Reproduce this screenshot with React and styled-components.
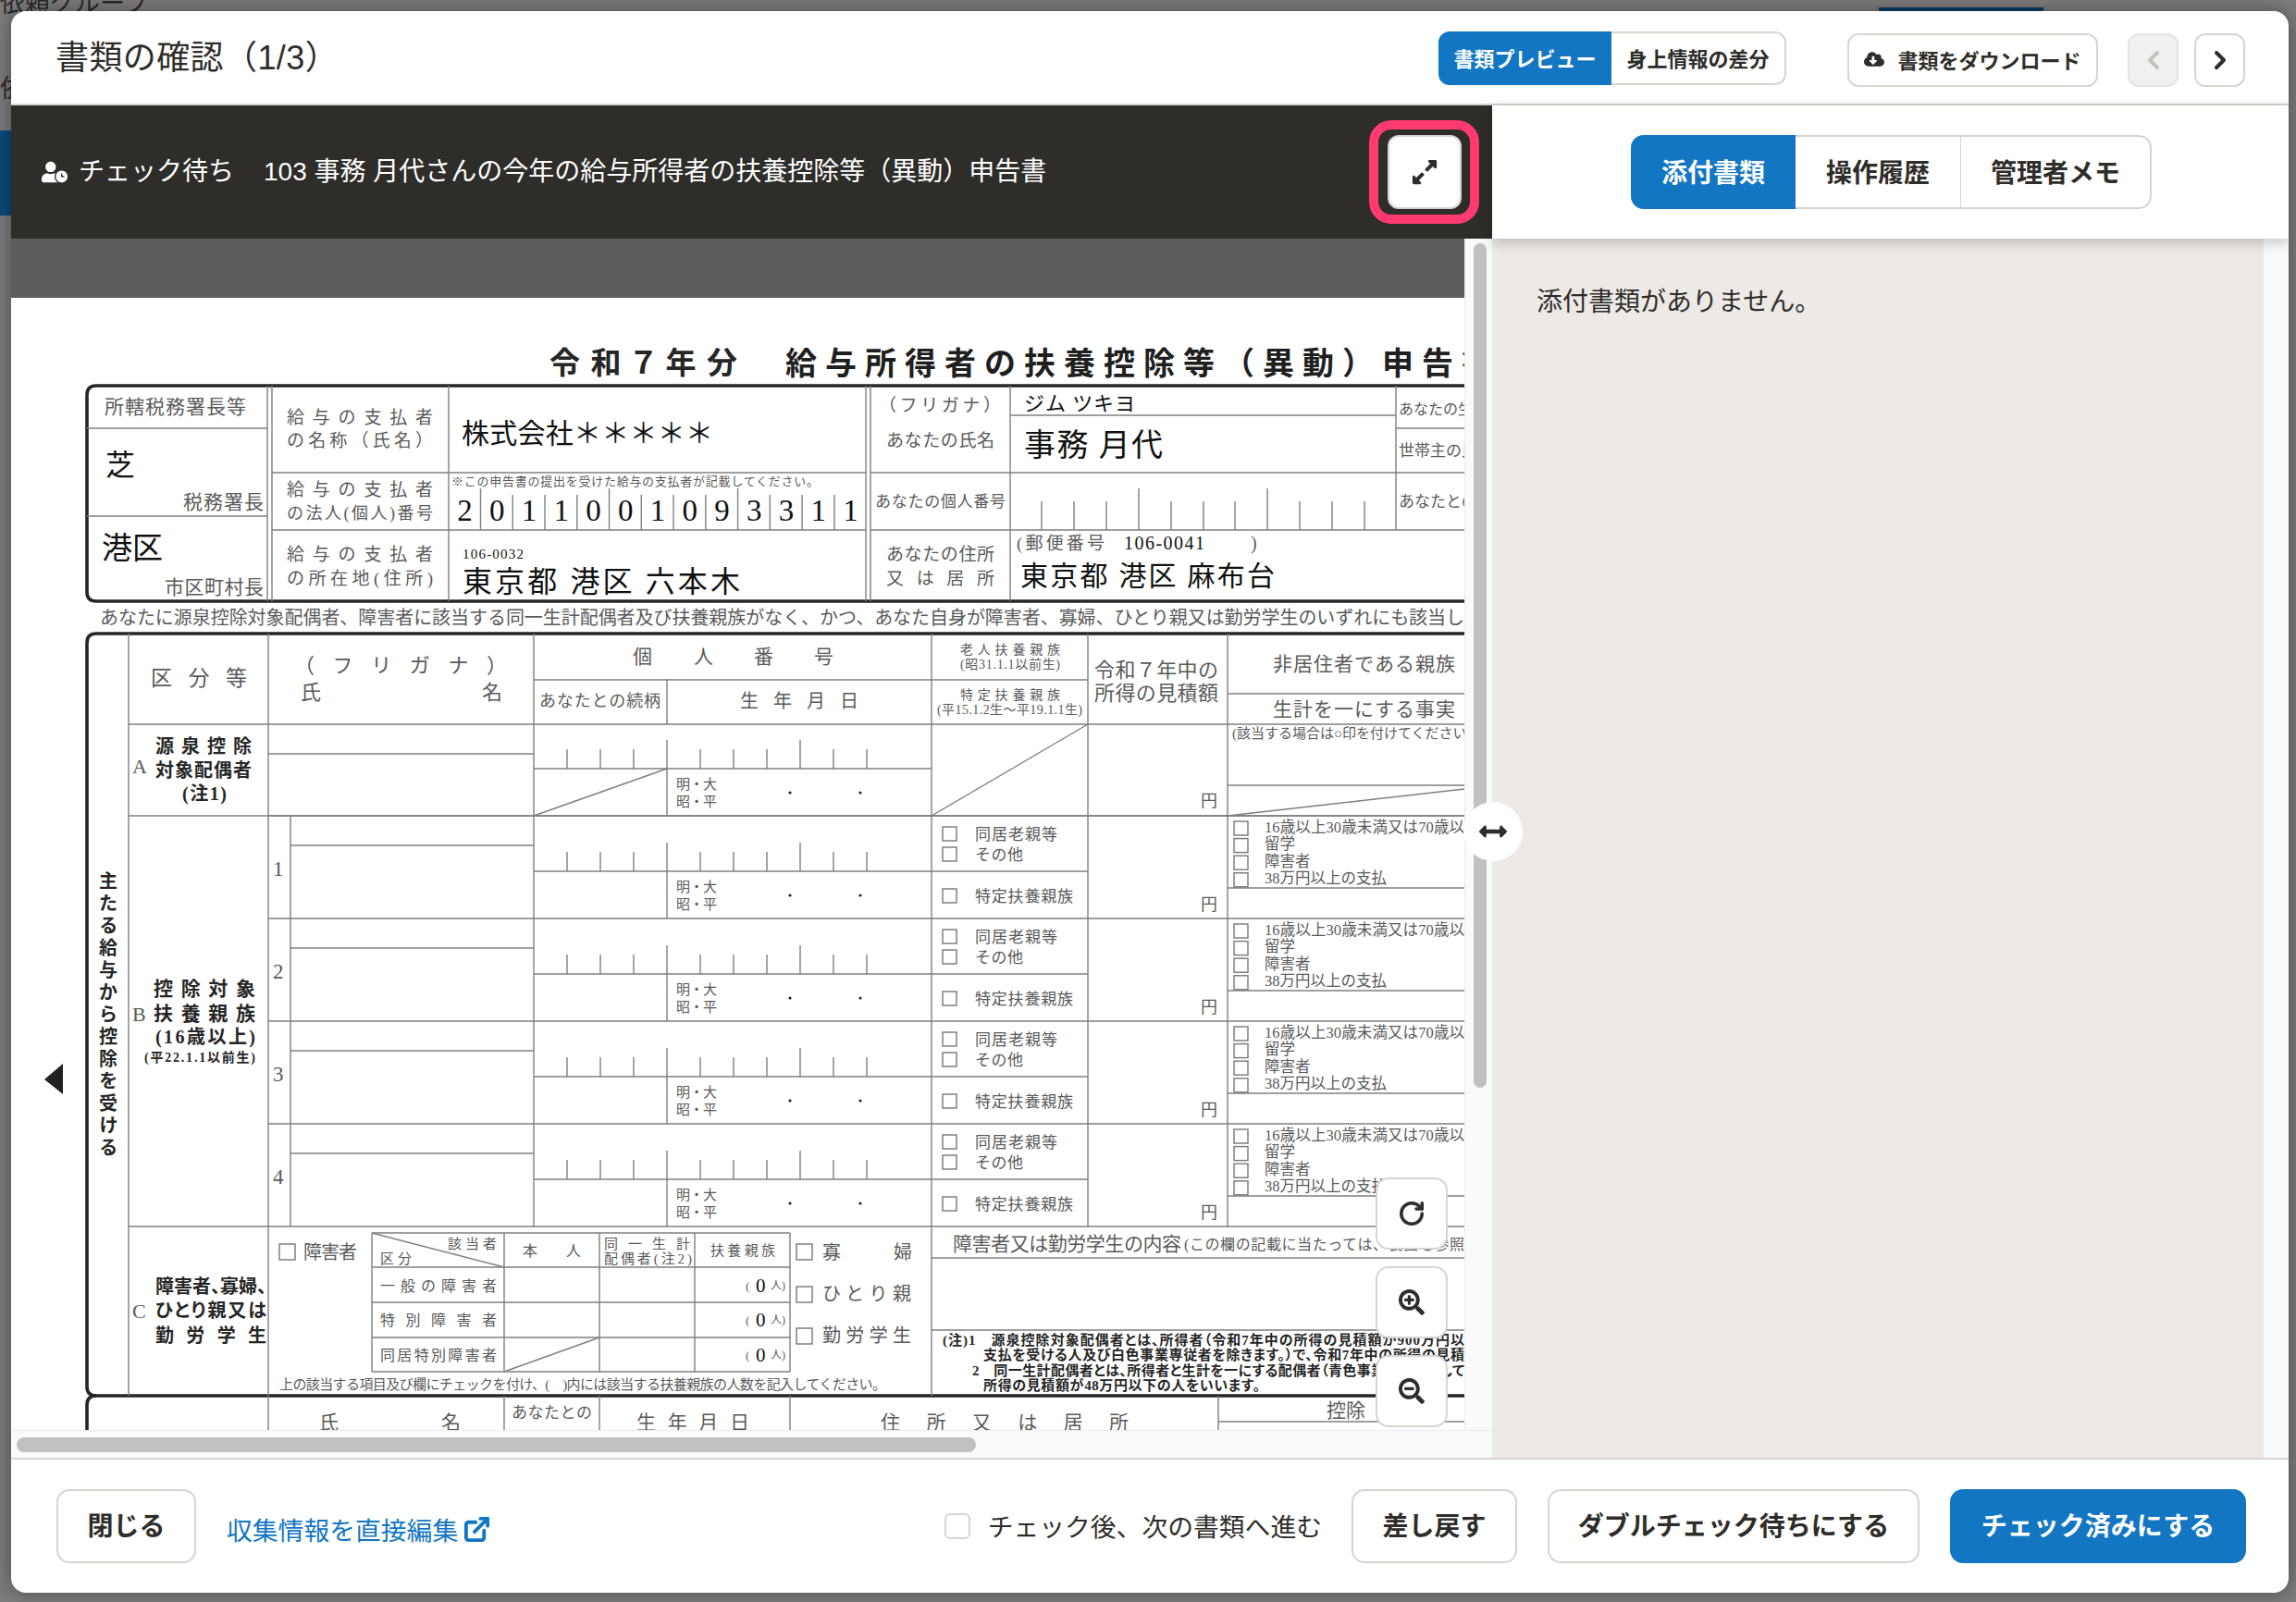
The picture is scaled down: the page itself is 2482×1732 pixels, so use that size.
import React from 'react';
import styled, { createGlobalStyle } from 'styled-components';
import { FaUserClock, FaExpandAlt, FaCloudDownloadAlt, FaArrowsAltH, FaSearchPlus, FaSearchMinus } from 'react-icons/fa';
import { ChevronLeft, ChevronRight, RotateCw, ExternalLink } from 'lucide-react';

const BLUE = '#1276c3';
const LINE = '#d8d4d0';
const INK = '#2e2d29';
const UI_FONT = '"Liberation Sans", "Noto Sans CJK JP", sans-serif';
const FORM_FONT = '"Liberation Serif", "Noto Sans CJK JP", serif';

const GlobalStyle = createGlobalStyle`
  html, body {
    margin: 0;
    padding: 0;
    background: #7e7c7c;
  }
  * {
    box-sizing: border-box;
  }
`;

// form lines: [x1, y1, x2, y2]
const formLines = [
  [289, 417, 289, 650], [294, 417, 294, 650], [94, 463, 289, 463], [94, 558, 289, 558],
  [294, 511, 936, 511], [294, 573, 936, 573], [485, 417, 485, 650], [936, 417, 936, 650],
  [941, 417, 941, 650], [941, 511, 1583, 511], [941, 573, 1583, 573], [1092, 417, 1092, 650],
  [1092, 449, 1509, 449], [1509, 417, 1509, 573], [1509, 463, 1583, 463],
  [139, 685, 139, 1509], [290, 685, 290, 1546], [577, 685, 577, 1327], [577, 735, 1176, 735],
  [721, 735, 721, 783], [1007, 685, 1007, 1509], [1176, 685, 1176, 1327], [1327, 685, 1327, 1327],
  [1327, 750, 1583, 750], [139, 783, 1583, 783], [290, 815, 577, 815], [577, 831, 1007, 831],
  [139, 882, 1583, 882], [577, 882, 721, 831], [1007, 882, 1176, 783], [1327, 849, 1583, 849],
  [1327, 882, 1583, 853], [314, 882, 314, 1326], [139, 1326, 1583, 1326],
  [402, 1333, 854, 1333], [402, 1370, 854, 1370], [402, 1408, 854, 1408], [402, 1446, 854, 1446],
  [402, 1483, 854, 1483], [402, 1333, 402, 1483], [545, 1333, 545, 1483], [648, 1333, 648, 1483],
  [751, 1333, 751, 1483], [854, 1333, 854, 1483], [402, 1333, 545, 1370], [545, 1483, 648, 1446],
  [1007, 1360, 1583, 1360], [1007, 1438, 1583, 1438],
  [545, 1509, 545, 1546], [648, 1509, 648, 1546], [854, 1509, 854, 1546], [1317, 1509, 1317, 1546],
  [1317, 1537, 1583, 1537],
];

// form labels: [text, x, centre y, size, right end (optional)]
const formLabels = [
  ['所轄税務署長等', 113, 440, 21, 266], ['税務署長', 198, 543, 21, 285], ['市区町村長', 178, 635, 21, 285],
  ['給与の支払者', 310, 451, 19, 468], ['の名称（氏名）', 310, 476, 19, 468], ['給与の支払者', 310, 529, 19, 468],
  ['の法人(個人)番号', 310, 555, 18, 468], ['給与の支払者', 310, 599, 19, 468], ['の所在地(住所)', 310, 625, 19, 468],
  ['※この申告書の提出を受けた給与の支払者が記載してください。', 488, 520, 13, 885],
  ['（フリガナ）', 950, 438, 19, 1082], ['あなたの氏名', 958, 476, 19, 1075], ['あなたの個人番号', 946, 542, 17, 1087],
  ['あなたの住所', 958, 599, 19, 1075], ['又は居所', 958, 625, 19, 1075],
  ['あなたの生年月日', 1512, 442, 16], ['世帯主の氏名', 1512, 487, 17], ['あなたとの続柄', 1512, 542, 17],
  ['(郵便番号', 1099, 587, 19, 1194], [')', 1352, 587, 20],
  ['あなたに源泉控除対象配偶者、障害者に該当する同一生計配偶者及び扶養親族がなく、かつ、あなた自身が障害者、寡婦、ひとり親又は勤労学生のいずれにも該当し', 108, 668, 20, 1583],
  ['区分等', 163, 733, 23, 267], ['（フリガナ）', 318, 719, 22, 548], ['氏', 325, 748, 22], ['名', 521, 748, 22],
  ['個', 684, 710, 21], ['人', 750, 710, 21], ['番', 815, 710, 21], ['号', 880, 710, 21],
  ['あなたとの続柄', 583, 758, 18, 714], ['生年月日', 800, 758, 20, 928],
  ['老人扶養親族', 1038, 702, 14, 1146], ['(昭31.1.1以前生)', 1038, 718, 14, 1146],
  ['特定扶養親族', 1038, 751, 14, 1146], ['(平15.1.2生～平19.1.1生)', 1013, 767, 14, 1170],
  ['令和７年中の', 1183, 724, 22, 1317], ['所得の見積額', 1183, 749, 22, 1317],
  ['非居住者である親族', 1376, 718, 21, 1573], ['生計を一にする事実', 1376, 767, 21, 1573],
  ['(該当する場合は○印を付けてください)', 1332, 793, 15],
  ['A', 143, 828, 22], ['B', 143, 1096, 22], ['C', 143, 1417, 22],
  ['障害者', 328, 1354, 20, 386], ['該当者', 484, 1345, 15, 537], ['区分', 411, 1361, 15, 445], ['本人', 565, 1352, 16, 628],
  ['同一生計', 653, 1345, 15, 746], ['配偶者(注2)', 653, 1361, 15, 748], ['扶養親族', 768, 1352, 15, 838],
  ['一般の障害者', 411, 1390, 16, 537], ['特別障害者', 411, 1427, 16, 537], ['同居特別障害者', 411, 1465, 16, 537],
  ['寡', 889, 1354, 20], ['婦', 966, 1354, 20], ['ひとり親', 889, 1399, 20, 985], ['勤労学生', 889, 1444, 20, 985],
  ['上の該当する項目及び欄にチェックを付け、(　)内には該当する扶養親族の人数を記入してください。', 302, 1497, 15, 958],
  ['障害者又は勤労学生の内容', 1030, 1345, 21, 1277], ['(この欄の記載に当たっては、裏面を参照', 1280, 1345, 16, 1583],
  ['氏', 345, 1538, 21], ['名', 477, 1538, 21], ['あなたとの', 553, 1527, 17, 640], ['生年月日', 688, 1538, 21, 810],
  ['住所又は居所', 952, 1538, 21, 1220], ['控除', 1434, 1525, 21],
];

const boldLabels = [
  ['令和７年分', 594, 393, 33, 797],
  ['源泉控除', 168, 807, 20, 272], ['対象配偶者', 168, 833, 20, 272], ['(注1)', 197, 858, 20, 245],
  ['控除対象', 166, 1069, 21, 276], ['扶養親族', 166, 1096, 21, 276], ['(16歳以上)', 168, 1121, 20, 276],
  ['(平22.1.1以前生)', 156, 1143, 14, 276],
  ['障害者、寡婦、', 168, 1391, 20, 288], ['ひとり親又は', 168, 1417, 20, 288], ['勤労学生', 168, 1444, 20, 288],
  ['(注)1　源泉控除対象配偶者とは、所得者（令和7年中の所得の見積額が900万円以', 1019, 1449, 15, 1583],
  ['支払を受ける人及び白色事業専従者を除きます。）で、令和7年中の所得の見積', 1063, 1465, 15, 1583],
  ['2　同一生計配偶者とは、所得者と生計を一にする配偶者（青色事業専従者として', 1051, 1482, 15, 1583],
  ['所得の見積額が48万円以下の人をいいます。', 1063, 1498, 15, 1362],
];

const filledLabels = [
  ['芝', 114, 503, 32], ['港区', 110, 593, 33], ['株式会社＊＊＊＊＊', 499, 468, 30, 771],
  ['106-0032', 500, 599, 15, 566], ['東京都 港区 六本木', 500, 629, 32, 800],
  ['ジム ツキヨ', 1107, 436, 22, 1227], ['事務 月代', 1107, 481, 34, 1257],
  ['106-0041', 1215, 587, 20, 1302], ['東京都 港区 麻布台', 1103, 622, 30, 1378],
];

const payerNumber = '2011001093311'.split('');
const verticalHeading = '主たる給与から控除を受ける'.split('');
const dependantRows = [882, 993, 1104, 1215];
const dependantFlags = ['16歳以上30歳未満又は70歳以', '留学', '障害者', '38万円以上の支払'];

const Label = ({ item, kind }) => {
  const [text, x, y, size, to] = item;
  return (
    <FormText
      $kind={kind}
      x={x}
      y={y}
      fontSize={size}
      dominantBaseline="central"
      textLength={to ? to - x : undefined}
      lengthAdjust={to ? 'spacing' : undefined}
    >
      {text}
    </FormText>
  );
};

const Ticks = ({ y, rowBottom }) => (
  <>
    {Array.from({ length: 10 }, (_, i) => {
      const x = 613 + 36 * i;
      const tall = i === 3 || i === 7;
      return <FormLine key={i} x1={x} y1={tall ? y - 31 : y - 21} x2={x} y2={y} />;
    })}
    <FormLine x1={721} y1={y} x2={721} y2={rowBottom} />
  </>
);

const BirthMarks = ({ y }) => (
  <>
    <Label kind="note" item={['明・大', 731, y, 15, 775]} />
    <Label kind="note" item={['昭・平', 731, y + 19, 15, 775]} />
    <circle cx={854} cy={y + 9} r={1.6} fill="#222" />
    <circle cx={930} cy={y + 9} r={1.6} fill="#222" />
  </>
);

const DependantRow = ({ top, index }) => (
  <g>
    <FormLine x1={290} y1={top} x2={1583} y2={top} />
    <FormLine x1={314} y1={top + 32} x2={577} y2={top + 32} />
    <FormLine x1={577} y1={top + 60} x2={1176} y2={top + 60} />
    <FormLine x1={1327} y1={top + 78} x2={1583} y2={top + 78} />
    <Ticks y={top + 60} rowBottom={top + 111} />
    <BirthMarks y={top + 77} />
    <Label item={[String(index + 1), 295, top + 57, 23]} />
    <CheckBox x={1019} y={top + 12} width={15} height={15} />
    <CheckBox x={1019} y={top + 34} width={15} height={15} />
    <CheckBox x={1019} y={top + 79} width={15} height={15} />
    <Label item={['同居老親等', 1054, top + 20, 17, 1143]} />
    <Label item={['その他', 1054, top + 42, 17, 1106]} />
    <Label item={['特定扶養親族', 1054, top + 87, 17, 1160]} />
    <Label item={['円', 1298, top + 96, 18]} />
    {dependantFlags.map((flag, i) => (
      <g key={flag}>
        <CheckBox x={1334} y={top + 6 + i * 18.6} width={15} height={15} />
        <Label item={[flag, 1367, top + 12 + i * 18.6, 16.5, i === 0 ? 1583 : undefined]} />
      </g>
    ))}
  </g>
);

const FormSheet = () => (
  <Sheet viewBox="12 322 1571 1224" width="1571" height="1224">
    <LeftMark points="68,1150 48,1167 68,1183" />
    <ThickPath d="M1583 417 H104 Q94 417 94 427 V640 Q94 650 104 650 H1583" />
    <ThickPath d="M1583 685 H104 Q94 685 94 695 V1499 Q94 1509 104 1509 H1583" />
    <ThickPath d="M94 1550 V1519 Q94 1509 104 1509" />
    {formLines.map((l, i) => (
      <FormLine key={i} x1={l[0]} y1={l[1]} x2={l[2]} y2={l[3]} />
    ))}
    {Array.from({ length: 12 }, (_, i) => {
      const x = 519.5 + 34.76 * i;
      return <FormLine key={i} x1={x} y1={i % 4 === 0 ? 528 : 535} x2={x} y2={573} />;
    })}
    {[1126, 1161, 1196, 1231, 1266, 1301, 1335, 1370, 1405, 1440, 1475].map(x => (
      <FormLine key={x} x1={x} y1={x === 1231 || x === 1370 ? 528 : 542} x2={x} y2={573} />
    ))}
    <Ticks y={831} rowBottom={882} />
    <BirthMarks y={848} />
    {dependantRows.map((top, i) => (
      <DependantRow key={top} top={top} index={i} />
    ))}
    <Label item={['円', 1298, 866, 18]} />
    {payerNumber.map((d, i) => (
      <FormText key={i} $kind="filled" x={502.5 + 34.76 * i} y={552} fontSize={33} textAnchor="middle" dominantBaseline="central">
        {d}
      </FormText>
    ))}
    {verticalHeading.map((c, i) => (
      <FormText key={i} $kind="bold" x={117} y={953 + i * 24} fontSize={20} textAnchor="middle" dominantBaseline="central">
        {c}
      </FormText>
    ))}
    <FormTitle x={849} y={393} fontSize={34} dominantBaseline="central">
      給与所得者の扶養控除等（異動）申告書
    </FormTitle>
    {[1345, 1391, 1436].map(y => (
      <CheckBox key={y} x={861} y={y} width={17} height={17} />
    ))}
    <CheckBox x={302} y={1345} width={17} height={17} />
    {[1390, 1427, 1465].map(y => (
      <g key={y}>
        <Label item={['(', 806, y, 13]} />
        <Label kind="filled" item={['0', 817, y, 21]} />
        <Label item={['人)', 833, y, 12]} />
      </g>
    ))}
    {formLabels.map((item, i) => (
      <Label key={i} item={item} />
    ))}
    {boldLabels.map((item, i) => (
      <Label key={i} kind="bold" item={item} />
    ))}
    {filledLabels.map((item, i) => (
      <Label key={i} kind="filled" item={item} />
    ))}
  </Sheet>
);

const App = () => (
  <Page>
    <GlobalStyle />
    <BackdropText $top={-14} $left={0}>依頼グループ</BackdropText>
    <BackdropText $top={78} $left={0}>依</BackdropText>
    <BackdropBlue />
    <BackdropTab />
    <Modal>
      <Header>
        <Title>書類の確認（1/3）</Title>
        <HeaderActions>
          <Toggle>
            <ToggleItem $active>書類プレビュー</ToggleItem>
            <ToggleItem>身上情報の差分</ToggleItem>
          </Toggle>
          <DownloadButton>
            <FaCloudDownloadAlt size={22} />
            書類をダウンロード
          </DownloadButton>
          <PagerGroup>
            <PagerButton $disabled><ChevronLeft size={32} strokeWidth={3} /></PagerButton>
            <PagerButton><ChevronRight size={32} strokeWidth={3} /></PagerButton>
          </PagerGroup>
        </HeaderActions>
      </Header>

      <Body>
        <LeftPane>
          <DarkBar>
            <DocStatus>
              <FaUserClock size={28} />
              <span>チェック待ち</span>
              <DocName>103 事務 月代さんの今年の給与所得者の扶養控除等（異動）申告書</DocName>
            </DocStatus>
            <ExpandRing>
              <ExpandButton><FaExpandAlt size={30} /></ExpandButton>
            </ExpandRing>
          </DarkBar>
          <DocArea>
            <Viewport>
              <Gutter />
              <FormSheet />
              <ZoomTools>
                <ZoomButton><RotateCw size={30} strokeWidth={2.8} /></ZoomButton>
                <ZoomButton><FaSearchPlus size={28} /></ZoomButton>
                <ZoomButton><FaSearchMinus size={28} /></ZoomButton>
              </ZoomTools>
            </Viewport>
            <VerticalTrack><VerticalThumb /></VerticalTrack>
            <HorizontalTrack><HorizontalThumb /></HorizontalTrack>
          </DocArea>
          <ResizeHandle><FaArrowsAltH size={30} /></ResizeHandle>
        </LeftPane>

        <RightPane>
          <TabBar>
            <Tabs>
              <Tab $active>添付書類</Tab>
              <Tab>操作履歴</Tab>
              <Tab>管理者メモ</Tab>
            </Tabs>
          </TabBar>
          <RightBody>
            <Attachments>添付書類がありません。</Attachments>
            <RightTrack />
          </RightBody>
        </RightPane>
      </Body>

      <Footer>
        <FooterLeft>
          <FooterButton $width={151}>閉じる</FooterButton>
          <EditLink>
            収集情報を直接編集
            <ExternalLink size={31} strokeWidth={3} />
          </EditLink>
        </FooterLeft>
        <FooterRight>
          <NextCheck>
            <NextBox />
            <NextLabel>チェック後、次の書類へ進む</NextLabel>
          </NextCheck>
          <FooterButton $width={179}>差し戻す</FooterButton>
          <FooterButton $width={402}>ダブルチェック待ちにする</FooterButton>
          <FooterButton $width={320} $primary>チェック済みにする</FooterButton>
        </FooterRight>
      </Footer>
    </Modal>
  </Page>
);

const Page = styled.div`
  position: relative;
  width: 2482px;
  height: 1732px;
  padding: 12px 8px 10px 12px;
  overflow: hidden;
  background: #7e7c7c;
  font-family: ${UI_FONT};
  color: ${INK};
`;

const BackdropText = styled.div`
  position: absolute;
  top: ${p => p.$top}px;
  left: ${p => p.$left}px;
  font-size: 27px;
  line-height: 36px;
  white-space: nowrap;
  color: #2b2a28;
`;

const BackdropBlue = styled.div`
  position: absolute;
  top: 141px;
  left: 0;
  width: 14px;
  height: 92px;
  background: #0a4a7c;
`;

const BackdropTab = styled.div`
  position: absolute;
  top: 8px;
  left: 2031px;
  width: 178px;
  height: 6px;
  background: #0a3d66;
`;

const Modal = styled.div`
  position: relative;
  display: flex;
  flex-direction: column;
  height: 100%;
  background: #fff;
  border-radius: 16px;
  overflow: hidden;
  box-shadow: 0 0 22px rgba(0, 0, 0, 0.4);
`;

const Header = styled.header`
  display: flex;
  flex: none;
  align-items: center;
  justify-content: space-between;
  height: 102px;
  padding: 0 47px 0 48px;
  border-bottom: 2px solid ${LINE};
`;

const Title = styled.h1`
  margin: 2px 0 0;
  font-size: 36px;
  font-weight: 400;
  line-height: 48px;
  letter-spacing: 0.4px;
`;

const HeaderActions = styled.div`
  display: flex;
  align-items: center;
`;

const Toggle = styled.div`
  display: flex;
  height: 58px;
  margin-right: 66px;
  margin-top: 2px;
`;

const ToggleItem = styled.div`
  display: flex;
  align-items: center;
  justify-content: center;
  width: ${p => (p.$active ? 187 : 189)}px;
  padding-bottom: 2px;
  font-size: 22px;
  font-weight: 700;
  background: ${p => (p.$active ? BLUE : '#fff')};
  color: ${p => (p.$active ? '#fff' : INK)};
  border: ${p => (p.$active ? 'none' : `2px solid ${LINE}`)};
  border-left: none;
  border-radius: ${p => (p.$active ? '12px 0 0 12px' : '0 12px 12px 0')};
`;

const DownloadButton = styled.div`
  display: flex;
  align-items: center;
  justify-content: center;
  gap: 14px;
  width: 271px;
  height: 58px;
  margin-top: 6px;
  padding-bottom: 3px;
  font-size: 22px;
  font-weight: 700;
  border: 2px solid ${LINE};
  border-radius: 12px;
`;

const PagerGroup = styled.div`
  display: flex;
  gap: 17px;
  margin: 6px 0 0 32px;
`;

const PagerButton = styled.div`
  display: flex;
  align-items: center;
  justify-content: center;
  width: 55px;
  height: 58px;
  border: 2px solid ${p => (p.$disabled ? '#e6e4e1' : LINE)};
  border-radius: 12px;
  background: ${p => (p.$disabled ? '#f1f0ee' : '#fff')};
  color: ${p => (p.$disabled ? '#c4c0bb' : INK)};
`;

const Body = styled.div`
  display: flex;
  flex: 1;
  min-height: 0;
`;

const LeftPane = styled.div`
  position: relative;
  display: flex;
  flex: none;
  flex-direction: column;
  width: 1601px;
`;

const DarkBar = styled.div`
  display: flex;
  flex: none;
  align-items: center;
  justify-content: space-between;
  height: 144px;
  padding: 0 14px 0 33px;
  background: ${INK};
  color: #fff;
`;

const DocStatus = styled.div`
  display: flex;
  align-items: center;
  gap: 12px;
  font-size: 28px;
  line-height: 36px;
`;

const DocName = styled.span`
  margin-left: 20px;
`;

const ExpandRing = styled.div`
  display: flex;
  align-items: center;
  justify-content: center;
  width: 119px;
  height: 112px;
  border: 10px solid #ff3a6e;
  border-radius: 24px;
`;

const ExpandButton = styled.div`
  display: flex;
  align-items: center;
  justify-content: center;
  width: 80px;
  height: 80px;
  background: #fff;
  color: ${INK};
  border: 2px solid ${LINE};
  border-radius: 12px;
`;

const DocArea = styled.div`
  display: grid;
  flex: 1;
  min-height: 0;
  grid-template-columns: 1571px 30px;
  grid-template-rows: 1fr 30px;
  background: #fafafa;
`;

const Viewport = styled.div`
  position: relative;
  display: flex;
  flex-direction: column;
  overflow: hidden;
  background: #fff;
`;

const Gutter = styled.div`
  flex: none;
  height: 64px;
  background: #5c5c5c;
`;

const Sheet = styled.svg`
  display: block;
  flex: none;
`;

const FormLine = styled.line`
  stroke: #7f7f7f;
  stroke-width: 1.4;
`;

const ThickPath = styled.path`
  fill: none;
  stroke: #262626;
  stroke-width: 3.6;
`;

const LeftMark = styled.polygon`
  fill: #222;
`;

const CheckBox = styled.rect`
  fill: #fff;
  stroke: #777;
  stroke-width: 1.4;
`;

const kindColors = { filled: '#111', bold: '#262626' };

const FormText = styled.text`
  font-family: ${FORM_FONT};
  font-weight: ${p => (p.$kind === 'bold' ? 700 : 400)};
  font-feature-settings: ${p => (p.$kind === 'bold' ? '"palt"' : 'normal')};
  fill: ${p => kindColors[p.$kind] || '#5a5a5a'};
`;

const FormTitle = styled.text`
  font-family: ${FORM_FONT};
  font-weight: 700;
  letter-spacing: 9px;
  fill: #1f1f1f;
`;

const ZoomTools = styled.div`
  position: absolute;
  right: 18px;
  bottom: 3px;
  display: flex;
  flex-direction: column;
  gap: 18px;
`;

const ZoomButton = styled.div`
  display: flex;
  align-items: center;
  justify-content: center;
  width: 78px;
  height: 78px;
  background: #fff;
  color: ${INK};
  border: 2px solid ${LINE};
  border-radius: 14px;
`;

const VerticalTrack = styled.div`
  padding: 5px 6px 0 9px;
  border-left: 1px solid #ececec;
`;

const VerticalThumb = styled.div`
  height: 913px;
  background: #c1c1c1;
  border-radius: 8px;
`;

const HorizontalTrack = styled.div`
  grid-column: 1 / 3;
  padding: 7px 0 0 6px;
  border-top: 1px solid #ececec;
`;

const HorizontalThumb = styled.div`
  width: 1037px;
  height: 16px;
  background: #c1c1c1;
  border-radius: 8px;
`;

const ResizeHandle = styled.div`
  position: absolute;
  top: 753px;
  right: -33px;
  display: flex;
  align-items: center;
  justify-content: center;
  width: 64px;
  height: 64px;
  background: #fff;
  color: ${INK};
  border-radius: 50%;
`;

const RightPane = styled.div`
  display: flex;
  flex: 1;
  flex-direction: column;
  min-width: 0;
`;

const TabBar = styled.div`
  position: relative;
  z-index: 1;
  display: flex;
  flex: none;
  align-items: center;
  height: 144px;
  padding-left: 150px;
  background: #fff;
  box-shadow: 0 4px 14px rgba(0, 0, 0, 0.22);
`;

const Tabs = styled.div`
  display: flex;
  height: 80px;
  border: 2px solid ${LINE};
  border-left: none;
  border-radius: 14px;
`;

const Tab = styled.div`
  display: flex;
  align-items: center;
  justify-content: center;
  width: 178px;
  margin: ${p => (p.$active ? '-2px 0' : 0)};
  padding-bottom: 2px;
  font-size: 28px;
  font-weight: 700;
  background: ${p => (p.$active ? BLUE : 'transparent')};
  color: ${p => (p.$active ? '#fff' : INK)};
  border-radius: ${p => (p.$active ? '14px 0 0 14px' : 0)};
  &:last-child {
    width: 205px;
    border-left: 1px solid ${LINE};
  }
`;

const RightBody = styled.div`
  display: flex;
  flex: 1;
  min-height: 0;
`;

const Attachments = styled.div`
  flex: 1;
  padding: 47px 0 0 48px;
  font-size: 28px;
  line-height: 44px;
  background: #ece9e6;
`;

const RightTrack = styled.div`
  flex: none;
  width: 28px;
  background: #fafafa;
  border-left: 1px solid #f0efed;
`;

const Footer = styled.footer`
  display: flex;
  flex: none;
  align-items: center;
  justify-content: space-between;
  height: 146px;
  padding: 0 46px 0 49px;
  border-top: 2px solid ${LINE};
`;

const FooterLeft = styled.div`
  display: flex;
  align-items: center;
  gap: 33px;
`;

const FooterRight = styled.div`
  display: flex;
  align-items: center;
  gap: 33px;
`;

const FooterButton = styled.div`
  display: flex;
  align-items: center;
  justify-content: center;
  width: ${p => p.$width}px;
  height: 80px;
  padding-bottom: 5px;
  font-size: 28px;
  font-weight: 700;
  background: ${p => (p.$primary ? BLUE : '#fff')};
  color: ${p => (p.$primary ? '#fff' : INK)};
  border: ${p => (p.$primary ? 'none' : `2px solid ${LINE}`)};
  border-radius: 14px;
`;

const EditLink = styled.div`
  display: flex;
  align-items: center;
  gap: 5px;
  margin-top: 6px;
  font-size: 27.8px;
  color: ${BLUE};
`;

const NextCheck = styled.div`
  display: flex;
  align-items: center;
  gap: 19px;
  margin-right: -1px;
`;

const NextLabel = styled.span`
  font-size: 27.8px;
  padding-bottom: 2px;
`;

const NextBox = styled.div`
  width: 28px;
  height: 28px;
  background: #fff;
  border: 2px solid ${LINE};
  border-radius: 6px;
`;

export default App;
